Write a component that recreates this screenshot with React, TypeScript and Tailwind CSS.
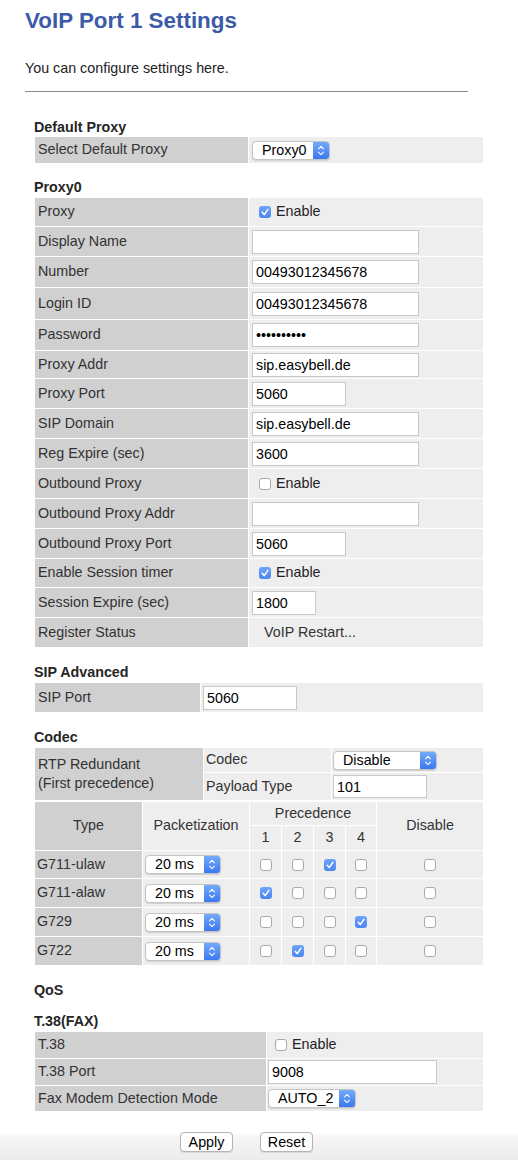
import React from 'react';

const proxyRows = [
  { label: 'Proxy', h: 28, kind: 'check', checked: true },
  { label: 'Display Name', h: 29, kind: 'input', value: '', w: 167 },
  { label: 'Number', h: 30, kind: 'input', value: '00493012345678', w: 167 },
  { label: 'Login ID', h: 31, kind: 'input', value: '00493012345678', w: 167 },
  { label: 'Password', h: 30, kind: 'input', value: '••••••••••', w: 167 },
  { label: 'Proxy Addr', h: 27, kind: 'input', value: 'sip.easybell.de', w: 167 },
  { label: 'Proxy Port', h: 29, kind: 'input', value: '5060', w: 94 },
  { label: 'SIP Domain', h: 29, kind: 'input', value: 'sip.easybell.de', w: 167 },
  { label: 'Reg Expire (sec)', h: 29, kind: 'input', value: '3600', w: 167 },
  { label: 'Outbound Proxy', h: 29, kind: 'check', checked: false },
  { label: 'Outbound Proxy Addr', h: 29, kind: 'input', value: '', w: 167 },
  { label: 'Outbound Proxy Port', h: 29, kind: 'input', value: '5060', w: 94 },
  { label: 'Enable Session timer', h: 28, kind: 'check', checked: true },
  { label: 'Session Expire (sec)', h: 29, kind: 'input', value: '1800', w: 64 },
  { label: 'Register Status', h: 29, kind: 'text', value: 'VoIP Restart...' },
];

// which precedence column is ticked per codec
const codecs = [
  { name: 'G711-ulaw', prec: 3, h: 27 },
  { name: 'G711-alaw', prec: 1, h: 28 },
  { name: 'G729', prec: 4, h: 28 },
  { name: 'G722', prec: 2, h: 28 },
];

function Check({ checked }: { checked: boolean }) {
  if (checked) {
    return (
      <span className="inline-flex h-[12px] w-[12px] items-center justify-center rounded-[3px] bg-[linear-gradient(to_bottom,#6ea4fa,#4a86f3)]">
        <svg viewBox="0 0 12 12" className="h-[12px] w-[12px]">
          <path d="M3.2 6.3 L5.2 8.6 L8.9 3.4" fill="none" stroke="#fff" strokeWidth="1.5" strokeLinecap="round" strokeLinejoin="round" />
        </svg>
      </span>
    );
  }
  return <span className="inline-block h-[12px] w-[12px] rounded-[3px] border border-[#a9a9a9] bg-white" />;
}

function MacSelect({ value, w }: { value: string; w: number }) {
  return (
    <div
      className="flex h-[19px] items-stretch rounded-[4px] border border-[#c4c4c4] bg-white shadow-[0_1px_1px_rgba(0,0,0,0.12)]"
      style={{ width: w }}
    >
      <span className="flex flex-1 items-center pl-[9px] text-[14.3px] leading-none text-black">{value}</span>
      <span className="flex w-[16px] items-center justify-center rounded-r-[3px] bg-[linear-gradient(to_bottom,#74aafb,#3b78f0)]">
        <svg viewBox="0 0 16 19" className="h-[17px] w-[14px]">
          <path d="M5.2 7.6 L8 4.9 L10.8 7.6" fill="none" stroke="#fff" strokeWidth="1.2" strokeLinecap="round" strokeLinejoin="round" />
          <path d="M5.2 11.4 L8 14.1 L10.8 11.4" fill="none" stroke="#fff" strokeWidth="1.2" strokeLinecap="round" strokeLinejoin="round" />
        </svg>
      </span>
    </div>
  );
}

function TextBox({ value, w, h = 24 }: { value: string; w: number; h?: number }) {
  return (
    <input
      readOnly
      value={value}
      className="border border-[#c8c8c8] bg-white px-[3px] text-[14.3px] text-black outline-none"
      style={{ width: w, height: h }}
    />
  );
}

function Heading({ children }: { children: React.ReactNode }) {
  return <div className="h-[20px] pl-[9px] text-[14.3px] font-bold leading-[20px] text-[#262626]">{children}</div>;
}

const label = 'flex items-center bg-[#d0d0d0] pl-[3px] text-[14.3px] text-[#333]';
const cell = 'flex items-center bg-[#eeeeee] text-[14.3px] text-[#333]';

export default function App() {
  return (
    <div className="min-h-[1160px] w-[518px] bg-white font-['Liberation_Sans',Arial,sans-serif]">
      <div className="pl-[25px]">
        <h1 className="h-[41px] text-[22.4px] font-bold leading-[41px] text-[#3b5aa8]">VoIP Port 1 Settings</h1>
        <p className="mt-[17px] h-[20px] text-[14.3px] leading-[20px] text-[#222]">You can configure settings here.</p>
        <div className="mt-[13px] w-[443px] border-t border-[#8a8a8a]" />

        {/* Default Proxy */}
        <div className="mt-[25px]">
          <Heading>Default Proxy</Heading>
          <div className="mt-[0px] ml-[10px] grid w-[448px] grid-cols-[213px_234px] gap-x-[1px]">
            <div className={`${label} h-[26px]`}>Select Default Proxy</div>
            <div className={`${cell} pl-[3px]`}>
              <MacSelect value="Proxy0" w={78} />
            </div>
          </div>
        </div>

        {/* Proxy0 */}
        <div className="mt-[14px]">
          <Heading>Proxy0</Heading>
          <div className="mt-[1px] ml-[10px] flex w-[448px] flex-col gap-[1px]">
            {proxyRows.map((r) => (
              <div key={r.label} className="grid grid-cols-[213px_234px] gap-x-[1px]" style={{ height: r.h }}>
                <div className={label}>{r.label}</div>
                {r.kind === 'check' && (
                  <div className={`${cell} gap-[5px] pl-[10px]`}>
                    <Check checked={!!r.checked} />
                    <span className="text-[#222]">Enable</span>
                  </div>
                )}
                {r.kind === 'input' && (
                  <div className={`${cell} pl-[3px]`}>
                    <TextBox value={r.value!} w={r.w!} />
                  </div>
                )}
                {r.kind === 'text' && <div className={`${cell} pl-[15px] text-[#111]`}>{r.value}</div>}
              </div>
            ))}
          </div>
        </div>

        {/* SIP Advanced */}
        <div className="mt-[15px]">
          <Heading>SIP Advanced</Heading>
          <div className="mt-[1px] ml-[10px] grid h-[29px] w-[448px] grid-cols-[165px_282px] gap-x-[1px]">
            <div className={label}>SIP Port</div>
            <div className={`${cell} pl-[2px]`}>
              <TextBox value="5060" w={94} />
            </div>
          </div>
        </div>

        {/* Codec */}
        <div className="mt-[15px]">
          <Heading>Codec</Heading>
          <div className="mt-[1px] ml-[10px] grid w-[448px] grid-cols-[168px_127px_151px] grid-rows-[24px_27px] gap-[1px]">
            <div className={`${label} row-span-2 pl-[1px] leading-[19px]`}>
              RTP Redundant
              <br />
              (First precedence)
            </div>
            <div className={`${cell} pl-[2px]`}>Codec</div>
            <div className={`${cell} pl-[1px]`}>
              <MacSelect value="Disable" w={104} />
            </div>
            <div className={`${cell} pl-[2px]`}>Payload Type</div>
            <div className={`${cell} pl-[1px]`}>
              <TextBox value="101" w={94} h={23} />
            </div>
          </div>

          <div className="mt-[2px] ml-[10px] grid w-[448px] grid-cols-[107px_106px_31px_31px_31px_30px_106px] grid-rows-[23px_24px] gap-[1px] text-[14.3px] text-[#333]">
            <div className="row-span-2 flex items-center justify-center bg-[#d0d0d0]">Type</div>
            <div className="row-span-2 flex items-center justify-center bg-[#eeeeee]">Packetization</div>
            <div className="col-span-4 flex items-center justify-center bg-[#eeeeee]">Precedence</div>
            <div className="row-span-2 flex items-center justify-center bg-[#eeeeee]">Disable</div>
            {[1, 2, 3, 4].map((n) => (
              <div key={n} className="flex items-center justify-center bg-[#eeeeee]">
                {n}
              </div>
            ))}
          </div>
          <div className="mt-[1px] ml-[10px] flex w-[448px] flex-col gap-[1px]">
            {codecs.map((c) => (
              <div
                key={c.name}
                className="grid grid-cols-[107px_106px_31px_31px_31px_30px_106px] gap-x-[1px] text-[14.3px] text-[#333]"
                style={{ height: c.h }}
              >
                <div className="flex items-center bg-[#d0d0d0] pl-[2px]">{c.name}</div>
                <div className="flex items-center bg-[#eeeeee] pl-[2px]">
                  <MacSelect value="20 ms" w={76} />
                </div>
                {[1, 2, 3, 4].map((n) => (
                  <div key={n} className="flex items-center justify-center bg-[#eeeeee]">
                    <Check checked={c.prec === n} />
                  </div>
                ))}
                <div className="flex items-center justify-center bg-[#eeeeee]">
                  <Check checked={false} />
                </div>
              </div>
            ))}
          </div>
        </div>

        {/* QoS */}
        <div className="mt-[15px]">
          <Heading>QoS</Heading>
        </div>

        {/* T.38 */}
        <div className="mt-[11px]">
          <Heading>T.38(FAX)</Heading>
          <div className="mt-[1px] ml-[10px] flex w-[448px] flex-col gap-[1px]">
            <div className="grid h-[26px] grid-cols-[231px_216px] gap-x-[1px]">
              <div className={`${label} pl-[1px]`}>T.38</div>
              <div className={`${cell} gap-[5px] pl-[8px]`}>
                <Check checked={false} />
                <span className="text-[#222]">Enable</span>
              </div>
            </div>
            <div className="grid h-[26px] grid-cols-[231px_216px] gap-x-[1px]">
              <div className={`${label} pl-[1px]`}>T.38 Port</div>
              <div className={`${cell} pl-[1px]`}>
                <TextBox value="9008" w={169} />
              </div>
            </div>
            <div className="grid h-[25px] grid-cols-[231px_216px] gap-x-[1px]">
              <div className={`${label} pl-[1px]`}>Fax Modem Detection Mode</div>
              <div className={`${cell} pl-[1px]`}>
                <MacSelect value="AUTO_2" w={88} />
              </div>
            </div>
          </div>
        </div>
      </div>

      {/* Footer buttons */}
      <div className="mt-[12px] h-[38px] bg-[linear-gradient(to_bottom,#ffffff_0%,#ffffff_25%,#f5f5f5_40%,#ebebeb_100%)] pt-[9px]">
        <div className="flex w-[468px] justify-center gap-[27px] pl-[25px]">
          <button className="h-[20px] w-[53px] rounded-[4px] border border-[#b4b4b4] bg-white text-[14.3px] leading-none text-black shadow-[0_1px_1px_rgba(0,0,0,0.1)]">
            Apply
          </button>
          <button className="h-[20px] w-[53px] rounded-[4px] border border-[#b4b4b4] bg-white text-[14.3px] leading-none text-black shadow-[0_1px_1px_rgba(0,0,0,0.1)]">
            Reset
          </button>
        </div>
      </div>
    </div>
  );
}
